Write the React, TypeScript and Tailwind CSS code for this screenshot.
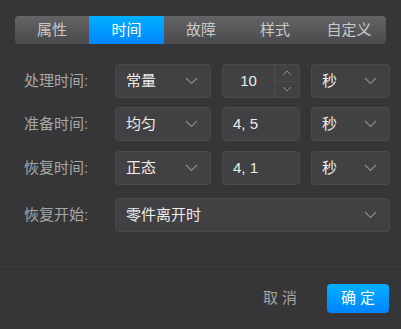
import React from "react";

const font = { fontFamily: '"Liberation Sans", "Noto Sans CJK SC", sans-serif' };

function Chevron({ className = "" }: { className?: string }) {
  return (
    <svg width="13" height="8" viewBox="0 0 13 8" fill="none" className={className}>
      <path d="M1 1l5.5 5.5L12 1" stroke="#8c8c8c" strokeWidth="1.1" />
    </svg>
  );
}

function Select({ value, className = "" }: { value: string; className?: string }) {
  return (
    <div
      className={
        "h-[34px] flex items-center justify-between pl-[10px] pr-[12px] rounded-[4px] bg-[#414143] border border-[#4a4a4c] text-[15px] text-[#ececec] " +
        className
      }
    >
      <span>{value}</span>
      <Chevron />
    </div>
  );
}

function Field({ value }: { value: string }) {
  return (
    <div className="w-[78px] h-[34px] flex items-center pl-[10px] rounded-[4px] bg-[#414143] border border-[#4a4a4c] text-[15px] text-[#ececec]">
      {value}
    </div>
  );
}

function NumberField({ value }: { value: string }) {
  return (
    <div className="w-[78px] h-[34px] flex rounded-[4px] bg-[#414143] border border-[#4a4a4c] text-[15px] text-[#ececec]">
      <div className="flex-1 flex items-center justify-center">{value}</div>
      <div className="w-[25px] flex flex-col border-l border-[#4e4e50]">
        <div className="flex-1 flex items-center justify-center border-b border-[#4e4e50]">
          <svg width="10" height="6" viewBox="0 0 10 6" fill="none">
            <path d="M1 5l4-4 4 4" stroke="#8c8c8c" strokeWidth="1" />
          </svg>
        </div>
        <div className="flex-1 flex items-center justify-center">
          <svg width="10" height="6" viewBox="0 0 10 6" fill="none">
            <path d="M1 1l4 4 4-4" stroke="#8c8c8c" strokeWidth="1" />
          </svg>
        </div>
      </div>
    </div>
  );
}

const tabs = ["属性", "时间", "故障", "样式", "自定义"];

export default function App() {
  return (
    <div className="w-[401px] h-[329px] bg-[#363638] flex flex-col" style={font}>
      <div className="mt-[16px] mx-[15px] h-[28px] flex rounded-[4px] overflow-hidden bg-gradient-to-b from-[#646466] to-[#4a4a4c]">
        {tabs.map((t, i) => (
          <div
            key={t}
            className={
              i === 1
                ? "w-[76px] flex items-center justify-center text-[15px] text-white bg-gradient-to-b from-[#00b0ff] to-[#0086ff]"
                : "w-[75px] flex items-center justify-center text-[15px] text-[#c8c8c8]"
            }
          >
            {t}
          </div>
        ))}
      </div>

      <div className="mt-[20px] flex flex-col">
        <div className="flex items-center">
          <div className="w-[115px] pl-[24px] text-[15px] text-[#a6a6a6]">处理时间:</div>
          <Select value="常量" className="w-[96px]" />
          <div className="ml-[11px]">
            <NumberField value="10" />
          </div>
          <Select value="秒" className="w-[79px] ml-[11px]" />
        </div>
        <div className="flex items-center mt-[9px]">
          <div className="w-[115px] pl-[24px] text-[15px] text-[#a6a6a6]">准备时间:</div>
          <Select value="均匀" className="w-[96px]" />
          <div className="ml-[11px]">
            <Field value="4, 5" />
          </div>
          <Select value="秒" className="w-[79px] ml-[11px]" />
        </div>
        <div className="flex items-center mt-[10px]">
          <div className="w-[115px] pl-[24px] text-[15px] text-[#a6a6a6]">恢复时间:</div>
          <Select value="正态" className="w-[96px]" />
          <div className="ml-[11px]">
            <Field value="4, 1" />
          </div>
          <Select value="秒" className="w-[79px] ml-[11px]" />
        </div>
        <div className="flex items-center mt-[13px]">
          <div className="w-[115px] pl-[24px] text-[15px] text-[#a6a6a6]">恢复开始:</div>
          <Select value="零件离开时" className="w-[275px]" />
        </div>
      </div>

      <div className="mt-[37px] h-px bg-[#2e2e30]" />

      <div className="mt-[14px] flex items-center justify-end pr-[12px]">
        <div className="text-[15px] text-[#a6a6a6] tracking-[4px] mr-[26px]">取消</div>
        <div className="w-[62px] h-[29px] flex items-center justify-center rounded-[4px] bg-gradient-to-b from-[#00b0ff] to-[#0082ff] text-[15px] text-white tracking-[4px] pl-[4px]">
          确定
        </div>
      </div>
    </div>
  );
}
